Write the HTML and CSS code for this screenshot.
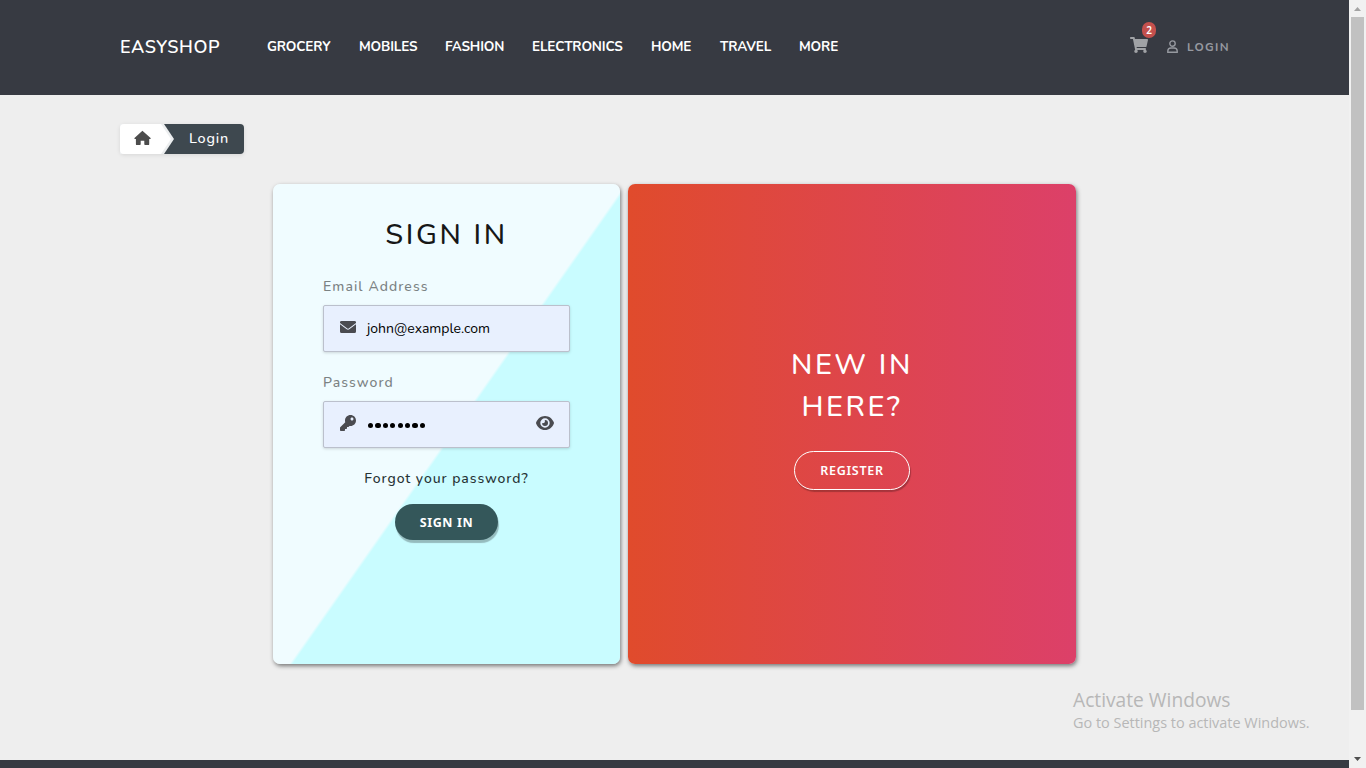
FILE: index.html
```html
<!DOCTYPE html>
<html lang="en">
<head>
<meta charset="utf-8">
<title>EasyShop - Login</title>
<link rel="stylesheet" href="styles.css">
</head>
<body>
<div class="page">
  <header class="navbar">
    <a class="brand">EASYSHOP</a>
    <nav class="menu">
      <a class="grocery">GROCERY</a><a class="mobiles">MOBILES</a><a class="fashion">FASHION</a><a class="electronics">ELECTRONICS</a><a class="home">HOME</a><a class="travel">TRAVEL</a><a class="more">MORE</a>
    </nav>
    <div class="account">
      <span class="cart">
        <svg width="18" height="16" viewBox="0 0 576 512"><path fill="currentColor" d="M528.1 301.3l47.3-208C578.800 78.300 567.400 64 552 64H159.200l-9.200-44.800C147.800 8 137.900 0 126.500 0H24C10.700 0 0 10.700 0 24v16c0 13.300 10.700 24 24 24h69.900l70.200 343.400C147.300 417.100 136 435.200 136 456c0 30.900 25.100 56 56 56s56-25.100 56-56c0-15.700-6.400-29.800-16.800-40h209.600C430.400 426.200 424 440.300 424 456c0 30.900 25.100 56 56 56s56-25.100 56-56c0-22.200-12.900-41.300-31.600-50.400l5.500-24.300c3.400-15-8-29.300-23.400-29.300H218.100l-6.500-32h293.100c11.200 0 20.900-7.800 23.400-18.700z"/></svg>
        <span class="badge">2</span>
      </span>
      <span class="user">
        <svg width="11" height="13" viewBox="0 0 11 13" fill="none" stroke="currentColor" stroke-width="1.400"><circle cx="5.500" cy="3.600" r="2.700"/><path d="M.8 12.200v-1.100C.8 9.300 2.300 8 4 8h3c1.700 0 3.200 1.300 3.200 3.100v1.100z"/></svg>
        <span class="login">LOGIN</span>
      </span>
    </div>
  </header>
  <main class="content">
    <div class="breadcrumb">
      <svg class="arrow" width="55" height="30" viewBox="0 0 55 30"><path fill="#eceeef" d="M0 0h44l10 15-10 15H0z"/><path fill="#fff" d="M4 0h37l10 15-10 15H4a4 4 0 0 1-4-4V4a4 4 0 0 1 4-4z"/><path fill="#4c4c4c" d="M22.400 6.800 30.600 14q.4.800-.4 1h-1v5.200q0 .9-.9.900h-3.200q-.8 0-.8-.8v-3.500h-3.600v3.500q0 .8-.8.800h-3q-1 0-1-.9V15h-1q-.9-.2-.4-1z"/></svg>
      <span class="current">Login</span>
    </div>
    <div class="cards">
      <section class="signin">
        <h1>SIGN IN</h1>
        <label class="l-email"><span>Email Address</span></label>
        <div class="field">
          <svg width="16" height="12" viewBox="0 0 16 12"><path fill="#4a4b50" d="M1.500 0h13Q16 0 16 1.300v.6L8.700 7.400q-.7.500-1.400 0L0 1.900v-.6Q0 0 1.500 0zM0 3.200l6.700 5q1.300.9 2.600 0l6.700-5v7.300q0 1.500-1.500 1.500h-13Q0 12 0 10.500z"/></svg>
          <span class="email">john@example.com</span>
        </div>
        <label class="l-pass"><span>Password</span></label>
        <div class="field">
          <svg width="16" height="16" viewBox="0 0 512 512"><path fill="#4a4b50" d="M512 176.001C512 273.203 433.202 352 336 352c-11.220 0-22.190-1.062-32.827-3.069l-24.012 27.014A23.999 23.999 0 0 1 261.223 384H224v40c0 13.255-10.745 24-24 24h-40v40c0 13.255-10.745 24-24 24H24c-13.255 0-24-10.745-24-24v-78.059c0-6.365 2.529-12.470 7.029-16.971l161.802-161.802C163.108 213.814 160 195.271 160 176 160 78.798 238.797.001 335.999 0 433.488-.001 512 78.511 512 176.001zM336 128c0 26.510 21.490 48 48 48s48-21.490 48-48-21.490-48-48-48-48 21.490-48 48z"/></svg>
          <span class="dots"><i></i><i></i><i></i><i></i><i></i><i></i><i></i><i></i></span>
          <svg class="eye" width="18" height="14" viewBox="0 0 18 14"><path fill="#4a4b50" fill-rule="evenodd" d="M9 0c4.200 0 7.400 2.900 8.800 6.300q.3.700 0 1.400C16.400 11.100 13.200 14 9 14S1.600 11.100.2 7.700q-.3-.7 0-1.400C1.600 2.900 4.800 0 9 0zM9 2.300a4.700 4.700 0 1 0 0 9.400 4.700 4.700 0 0 0 0-9.400zM9 4a3 3 0 1 1-3 3q.4.200.9.200A2 2 0 0 0 8.900 5q0-.5-.2-1z"/></svg>
        </div>
        <a class="forgot">Forgot your password?</a>
        <button class="btn">SIGN IN</button>
      </section>
      <section class="register">
        <h1>NEW IN<br><span>HERE?</span></h1>
        <button class="btn outline">REGISTER</button>
      </section>
    </div>
  </main>
  <footer class="footer"></footer>
</div>
<div class="scrollbar"><svg class="up" width="17" height="17"><path d="M5 11h7L8.500 7z" fill="#a3a3a3"/></svg><div class="thumb"></div><svg width="17" height="17"><path d="M5 6h7l-3.500 4z" fill="#505050"/></svg></div>
<div class="watermark"><p class="w1">Activate Windows</p><p class="w2">Go to Settings to activate Windows.</p></div>
</body>
</html>
```
FILE: styles.css
```css
* { box-sizing: border-box; }
body { margin: 0; width: 1366px; height: 768px; overflow: hidden; display: flex; background: #eee; font-family: Nunito, Lato, sans-serif; white-space: nowrap; }
h1, p { margin: 0; font-weight: 400; }
svg { display: block; flex: none; }
.page { width: 1349px; height: 768px; display: flex; flex-direction: column; }
.navbar { height: 95px; background: #373a42; color: #fff; display: flex; align-items: center; padding: 0 120px 3px; }
.brand { width: 147px; padding-top: 2px; font-size: 18px; font-weight: 600; letter-spacing: .6px; }
.menu { display: flex; gap: 28px; font-size: 13.500px; font-weight: 700; letter-spacing: -.15px; }
.menu a { width: 64px; }
.menu .mobiles { width: 58px; }
.menu .fashion { width: 59px; }
.menu .electronics { width: 91px; }
.menu .home { width: 41px; }
.menu .travel { width: 51px; }
.menu .more { width: 40px; }
.account { margin-left: auto; display: flex; gap: 19px; color: #a0a2a6; }
.cart { position: relative; width: 18px; }
.badge { position: absolute; left: 12px; top: -15px; width: 14px; height: 16px; border-radius: 7px; background: #c4504d; color: #fff; font-family: "Noto Sans", sans-serif; font-size: 10px; font-weight: 600; line-height: 17px; text-align: center; }
.user { display: flex; align-items: center; gap: 9px; color: #9699a0; padding-top: 1px; }
.login { width: 42px; padding-top: 1px; font-size: 11.800px; font-weight: 700; letter-spacing: 1.300px; }
.content { height: 665px; padding-top: 29px; }
.breadcrumb { display: flex; margin-left: 120px; width: 124px; height: 30px; border-radius: 4px; background: #3e484f; color: #fff; box-shadow: 0 1px 4px rgba(0,0,0,.1); }
.current { margin-left: 14px; font-size: 14.400px; font-weight: 500; line-height: 29px; letter-spacing: .8px; }
.cards { display: flex; gap: 8px; margin: 30px 0 0 273px; }
.signin, .register { height: 480px; border-radius: 7px; box-shadow: 1px 2px 4px rgba(0,0,0,.5); display: flex; flex-direction: column; align-items: center; }
.signin { width: 347px; padding: 30px 50px 0; background: linear-gradient(125deg, #f0fcff 51.600%, #c9fcff 52.100%); }
h1 { font-size: 28.800px; font-weight: 500; line-height: 42px; letter-spacing: 2.600px; color: #171717; }
.signin label { align-self: flex-start; height: 20px; line-height: 20px; margin: 21px 0 8px; font-size: 14px; font-weight: 500; letter-spacing: 1.080px; color: #7b8283; }
.signin .l-pass { margin-top: 21px; }
.field { width: 247px; height: 47px; padding: 0 15px 3px 16px; display: flex; align-items: center; gap: 11px; border: 1px solid #bbc0cc; border-radius: 2px; background: #e8f0fe; box-shadow: 0 1px 3px rgba(0,0,0,.15); }
.email { font-size: 14px; color: #000; padding-top: 3px; }
.dots { display: flex; gap: 2.100px; padding: 5px 0 0 1px; }
.dots i { width: 5.300px; height: 5.300px; border-radius: 50%; background: #000; }
.eye { margin-left: auto; }
.forgot { margin-top: 21px; height: 20px; line-height: 20px; font-size: 14px; font-weight: 500; letter-spacing: .930px; color: #263234; }
.btn { width: 103px; height: 36px; margin-top: 15px; padding: 0; border: 0; border-radius: 20px; background: #34575a; color: #fff; font: 700 12.500px "Noto Sans", sans-serif; letter-spacing: .6px; box-shadow: 1px 3px 1px rgba(0,0,0,.26); }
.register { width: 448px; padding-top: 160px; background: linear-gradient(90deg, #e04b2c, #dc4069); }
.register h1 { color: #fff; text-align: center; }
.btn.outline { width: 116px; height: 39px; margin-top: 23px; border: 1px solid #fff; background: transparent; font-weight: 600; letter-spacing: .7px; box-shadow: 1px 2px 1px rgba(0,0,0,.25); }
.footer { height: 8px; background: #373a42; }
.scrollbar { width: 17px; height: 768px; background: #f1f1f1; display: flex; flex-direction: column; }
.thumb { width: 13px; height: 693px; margin: 0 0 41px 2px; background: #c1c1c1; }
.watermark { position: absolute; left: 1073px; top: 686px; color: #b7b7b7; font-family: "Segoe UI", "Open Sans", sans-serif; font-weight: 300; }
.w1 { font-size: 19.200px; line-height: 28px; }
.w2 { font-size: 14.450px; line-height: 17px; }
```
